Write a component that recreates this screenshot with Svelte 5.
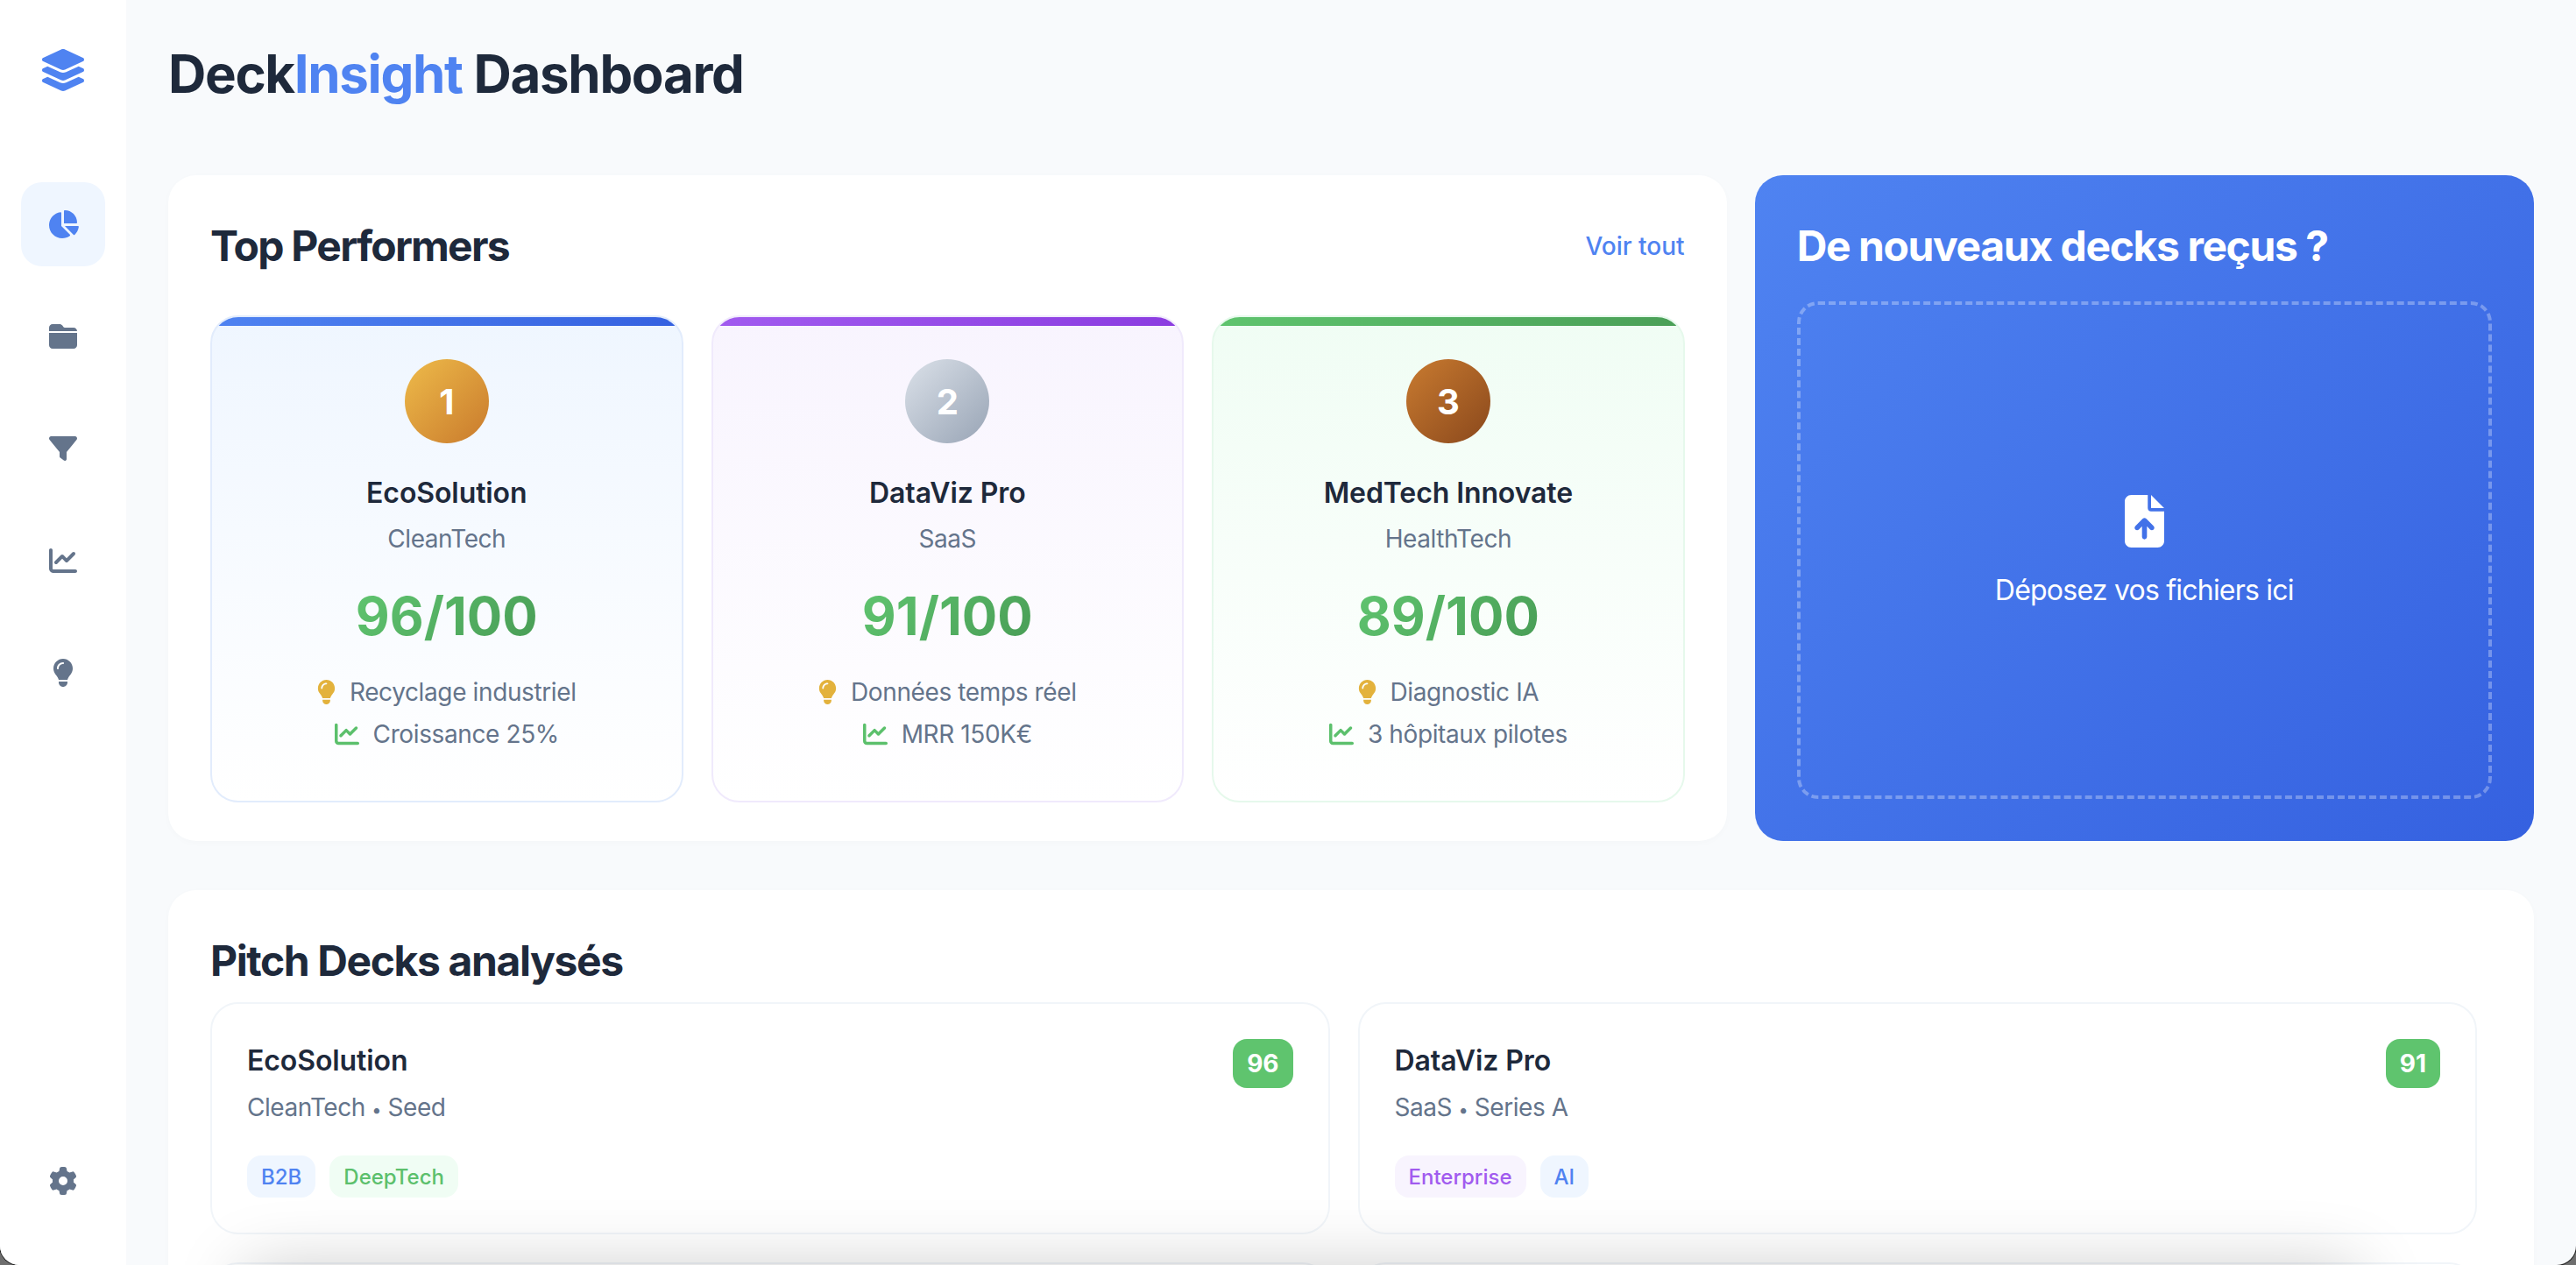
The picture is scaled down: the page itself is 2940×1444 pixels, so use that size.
<script>
    const icons = {
        layers: ["0 0 576 512", "M264.5 5.2c14.9-6.9 32.1-6.9 47 0l218.6 101c8.5 3.9 13.9 12.4 13.9 21.8s-5.4 17.9-13.9 21.8l-218.6 101c-14.9 6.9-32.1 6.9-47 0L45.9 149.8C37.4 145.8 32 137.3 32 128s5.4-17.9 13.9-21.8L264.5 5.2zM476.9 209.6l53.2 24.6c8.5 3.9 13.9 12.4 13.9 21.8s-5.4 17.9-13.9 21.8l-218.6 101c-14.9 6.9-32.1 6.9-47 0L45.9 277.8C37.4 273.8 32 265.3 32 256s5.4-17.9 13.9-21.8l53.2-24.6 152 70.2c23.4 10.8 50.4 10.8 73.8 0l152-70.2zm-152 198.2l152-70.2 53.2 24.6c8.5 3.9 13.9 12.4 13.9 21.8s-5.4 17.9-13.9 21.8l-218.6 101c-14.9 6.9-32.1 6.9-47 0L45.9 405.8C37.4 401.8 32 393.3 32 384s5.4-17.9 13.9-21.8l53.2-24.6 152 70.2c23.4 10.8 50.4 10.8 73.8 0z"],
        pie: ["0 0 576 512", "M304 240V16.6c0-9 7-16.6 16-16.6C443.7 0 544 100.3 544 224c0 9-7.6 16-16.6 16H304zM32 272C32 150.7 122.1 50.3 239 34.3c9.2-1.3 17 6.1 17 15.4V288L412.5 444.5c6.7 6.7 6.2 17.7-1.5 23.1C371.8 495.6 323.8 512 272 512C139.5 512 32 404.6 32 272zm526.4 16c9.3 0 16.6 7.8 15.4 17c-7.7 55.9-34.6 105.6-73.9 142.3c-6 5.6-15.4 5.2-21.2-.7L320 288H558.4z"],
        folder: ["0 0 512 512", "M448 480H64c-35.3 0-64-28.7-64-64V192H512V416c0 35.3-28.7 64-64 64zm64-320H0V96C0 60.7 28.7 32 64 32H192c20.1 0 39.1 9.5 51.2 25.6l19.2 25.6c6 8.1 15.5 12.8 25.6 12.8H448c35.3 0 64 28.7 64 64z"],
        filter: ["0 0 512 512", "M3.9 54.9C10.5 40.9 24.5 32 40 32H472c15.5 0 29.5 8.9 36.1 22.9s4.6 30.5-5.2 42.5L320 320.9V448c0 12.1-6.8 23.2-17.7 28.6s-23.8 4.3-33.5-3l-64-48c-8.1-6-12.8-15.5-12.8-25.6V320.9L9 97.3C-.7 85.4-2.8 68.8 3.9 54.9z"],
        chart: ["0 0 512 512", "M64 64c0-17.7-14.3-32-32-32S0 46.3 0 64V400c0 44.2 35.8 80 80 80H480c17.7 0 32-14.3 32-32s-14.3-32-32-32H80c-8.8 0-16-7.2-16-16V64zm406.6 86.6c12.5-12.5 12.5-32.8 0-45.3s-32.8-12.5-45.3 0L320 210.7l-57.4-57.4c-12.5-12.5-32.8-12.5-45.3 0l-112 112c-12.5 12.5-12.5 32.8 0 45.3s32.8 12.5 45.3 0L240 221.3l57.4 57.4c12.5 12.5 32.8 12.5 45.3 0l128-128z"],
        bulb: ["0 0 384 512", "M272 384c9.6-31.9 29.5-59.1 49.2-86.2l0 0c5.2-7.1 10.4-14.2 15.4-21.4c19.8-28.5 31.4-63 31.4-100.3C368 78.8 289.2 0 192 0S16 78.8 16 176c0 37.3 11.6 71.9 31.4 100.3c5 7.2 10.2 14.3 15.4 21.4l0 0c19.8 27.1 39.7 54.4 49.2 86.2H272zM192 512c44.2 0 80-35.8 80-80V416H112v16c0 44.2 35.8 80 80 80zM112 176c0 8.8-7.2 16-16 16s-16-7.2-16-16c0-61.9 50.1-112 112-112c8.8 0 16 7.2 16 16s-7.2 16-16 16c-44.2 0-80 35.8-80 80z"],
        gear: ["0 0 512 512", "M495.9 166.6c3.2 8.7 .5 18.4-6.4 24.6l-43.3 39.4c1.1 8.3 1.7 16.8 1.7 25.4s-.6 17.1-1.7 25.4l43.3 39.4c6.9 6.2 9.6 15.9 6.4 24.6c-4.4 11.9-9.7 23.3-15.8 34.3l-4.7 8.1c-6.6 11-14 21.4-22.1 31.2c-5.9 7.2-15.7 9.6-24.5 6.8l-55.7-17.7c-13.4 10.3-28.2 18.9-44 25.4l-12.5 57.1c-2 9.1-9 16.3-18.2 17.8c-13.8 2.3-28 3.5-42.5 3.5s-28.7-1.2-42.5-3.5c-9.2-1.5-16.2-8.7-18.2-17.8l-12.5-57.1c-15.8-6.5-30.6-15.1-44-25.4L83.1 425.9c-8.8 2.8-18.6 .3-24.5-6.8c-8.1-9.8-15.5-20.2-22.1-31.2l-4.7-8.1c-6.1-11-11.4-22.4-15.8-34.3c-3.2-8.7-.5-18.4 6.4-24.6l43.3-39.4C64.6 273.1 64 264.6 64 256s.6-17.1 1.7-25.4L22.4 191.2c-6.9-6.2-9.6-15.9-6.4-24.6c4.4-11.9 9.7-23.3 15.8-34.3l4.7-8.1c6.6-11 14-21.4 22.1-31.2c5.9-7.2 15.7-9.6 24.5-6.8l55.7 17.7c13.4-10.3 28.2-18.9 44-25.4l12.5-57.1c2-9.1 9-16.3 18.2-17.8C227.3 1.2 241.5 0 256 0s28.7 1.2 42.5 3.5c9.2 1.5 16.2 8.7 18.2 17.8l12.5 57.1c15.8 6.5 30.6 15.1 44 25.4l55.7-17.7c8.8-2.8 18.6-.3 24.5 6.8c8.1 9.8 15.5 20.2 22.1 31.2l4.7 8.1c6.1 11 11.4 22.4 15.8 34.3zM256 336a80 80 0 1 0 0-160 80 80 0 1 0 0 160z"],
        upload: ["0 0 384 512", "M64 0C28.7 0 0 28.7 0 64V448c0 35.3 28.7 64 64 64H320c35.3 0 64-28.7 64-64V160H256c-17.7 0-32-14.3-32-32V0H64zM256 0V128H384L256 0zM216 408c0 13.3-10.7 24-24 24s-24-10.7-24-24V305.9l-31 31c-9.4 9.4-24.6 9.4-33.9 0s-9.4-24.6 0-33.9l72-72c9.4-9.4 24.6-9.4 33.9 0l72 72c9.4 9.4 9.4 24.6 0 33.9s-24.6 9.4-33.9 0l-31-31V408z"],
    };

    const navItems = ["pie", "folder", "filter", "chart", "bulb"];

    const performers = [
        { rank: 1, name: "EcoSolution", sector: "CleanTech", score: 96, idea: "Recyclage industriel", metric: "Croissance 25%", tone: "blue" },
        { rank: 2, name: "DataViz Pro", sector: "SaaS", score: 91, idea: "Données temps réel", metric: "MRR 150K€", tone: "purple" },
        { rank: 3, name: "MedTech Innovate", sector: "HealthTech", score: 89, idea: "Diagnostic IA", metric: "3 hôpitaux pilotes", tone: "green" },
    ];

    const decks = [
        { name: "EcoSolution", sector: "CleanTech", stage: "Seed", score: 96, tags: [["B2B", "blue"], ["DeepTech", "green"]] },
        { name: "DataViz Pro", sector: "SaaS", stage: "Series A", score: 91, tags: [["Enterprise", "purple"], ["AI", "blue"]] },
    ];
</script>

{#snippet icon(name, cls)}
    <svg class={cls} viewBox={icons[name][0]} aria-hidden="true"><path d={icons[name][1]} /></svg>
{/snippet}

<div class="window">
    <aside class="sidebar">
        <div class="logo">{@render icon("layers", "logo-icon")}</div>
        <nav class="nav">
            {#each navItems as item, i}
                <div class="nav-item" class:active={i === 0}>{@render icon(item, "nav-icon")}</div>
            {/each}
        </nav>
        <div class="nav-item">{@render icon("gear", "nav-icon")}</div>
    </aside>

    <main class="page">
        <h1>Deck<span>Insight</span> Dashboard</h1>

        <div class="top-row">
            <section class="panel performers">
                <div class="panel-head">
                    <h2>Top Performers</h2>
                    <span class="see-all">Voir tout</span>
                </div>
                <div class="podium">
                    {#each performers as p}
                        <article class="performer {p.tone}">
                            <div class="medal rank-{p.rank}">{p.rank}</div>
                            <h3>{p.name}</h3>
                            <p class="sector">{p.sector}</p>
                            <p class="score">{p.score}/100</p>
                            <div class="fact">{@render icon("bulb", "fact-icon bulb")}{p.idea}</div>
                            <div class="fact">{@render icon("chart", "fact-icon trend")}{p.metric}</div>
                        </article>
                    {/each}
                </div>
            </section>

            <section class="upload">
                <h2>De nouveaux decks reçus ?</h2>
                <div class="dropzone">
                    {@render icon("upload", "upload-icon")}
                    <p>Déposez vos fichiers ici</p>
                </div>
            </section>
        </div>

        <section class="panel decks">
            <h2>Pitch Decks analysés</h2>
            <div class="deck-grid">
                {#each decks as d}
                    <article class="deck">
                        <div class="deck-head">
                            <div>
                                <h3>{d.name}</h3>
                                <p class="meta">{d.sector} <span class="dot">•</span> {d.stage}</p>
                            </div>
                            <span class="badge">{d.score}</span>
                        </div>
                        <div class="tags">
                            {#each d.tags as [label, tone]}
                                <span class="tag {tone}">{label}</span>
                            {/each}
                        </div>
                    </article>
                {/each}
                <!-- next row is cut off by the window, only its top edge shows -->
                <article class="deck empty"></article>
                <article class="deck empty"></article>
            </div>
        </section>

        <div class="drop-shadow"></div>
    </main>
</div>

<style>
    :global(body) {
        margin: 0;
        background: #6e6e6e;
        font-family: Inter, "Liberation Sans", sans-serif;
        overflow: hidden;
    }

    .window {
        display: flex;
        height: 1444px;
        overflow: hidden;
        border-radius: 0 0 22px 22px;
        background: #f8fafc;
        box-shadow: 0 0 0 1px #222;
    }

    svg {
        display: block;
        fill: currentColor;
        flex: none;
    }

    .sidebar {
        flex: none;
        width: 144px;
        box-sizing: border-box;
        padding: 56px 24px 48px;
        display: flex;
        flex-direction: column;
        align-items: center;
        background: #fff;
        color: #64748b;
    }

    .logo {
        color: #4f83f1;
        margin-bottom: 104px;
    }

    :global(.logo-icon) {
        height: 48px;
    }

    .nav {
        flex: 1;
        display: flex;
        flex-direction: column;
        gap: 32px;
    }

    .nav-item {
        width: 96px;
        height: 96px;
        border-radius: 24px;
        display: flex;
        align-items: center;
        justify-content: center;
    }

    .nav-item.active {
        background: #eff6ff;
        color: #4f83f1;
    }

    :global(.nav-icon) {
        height: 32px;
    }

    .page {
        position: relative;
        flex: 1;
        min-width: 0;
        padding: 48px 48px 0;
    }

    h1 {
        margin: 0 0 80px;
        font-size: 60px;
        line-height: 72px;
        font-weight: 700;
        letter-spacing: -1.34px;
        color: #1e293b;
    }

    h1 span {
        color: #4f83f1;
    }

    h2 {
        margin: 0;
        font-size: 48px;
        line-height: 66px;
        font-weight: 700;
        letter-spacing: -1.4px;
        color: #1e293b;
    }

    .performers h2 {
        letter-spacing: -1.75px;
    }

    h3 {
        margin: 0;
        font-size: 32px;
        line-height: 48px;
        font-weight: 600;
        letter-spacing: -0.1px;
        color: #1e293b;
    }

    p {
        margin: 0;
    }

    .top-row {
        display: grid;
        grid-template-columns: 2fr 1fr;
        gap: 32px;
        margin-bottom: 56px;
    }

    .panel {
        background: #fff;
        border-radius: 32px;
        padding: 48px;
        box-shadow: 0 2px 8px rgba(15, 23, 42, 0.02);
    }

    .performers {
        padding-bottom: 44px;
    }

    .panel-head {
        display: flex;
        justify-content: space-between;
        align-items: center;
        margin-bottom: 46px;
    }

    .see-all {
        font-size: 28px;
        font-weight: 500;
        color: #4f83f1;
    }

    .podium {
        display: grid;
        grid-template-columns: repeat(3, 1fr);
        gap: 32px;
    }

    .performer {
        position: relative;
        overflow: hidden;
        height: 556px;
        box-sizing: border-box;
        padding-top: 48px;
        border: 2px solid;
        border-radius: 32px;
        display: flex;
        flex-direction: column;
        align-items: center;
    }

    .performer::before {
        content: "";
        position: absolute;
        top: 0;
        left: 0;
        right: 0;
        height: 10px;
    }

    .performer.blue {
        background: linear-gradient(180deg, #eff6ff, #fff);
        border-color: #e2ecfc;
    }

    .performer.blue::before {
        background: linear-gradient(90deg, #4f83f1, #3561e0);
    }

    .performer.purple {
        background: linear-gradient(180deg, #f8f4fe, #fff);
        border-color: #f0eafc;
    }

    .performer.purple::before {
        background: linear-gradient(90deg, #a15bef, #8b3ce0);
    }

    .performer.green {
        background: linear-gradient(180deg, #f0fdf4, #fff);
        border-color: #e6f9ec;
    }

    .performer.green::before {
        background: linear-gradient(90deg, #5fc46e, #4a9f57);
    }

    .medal {
        width: 96px;
        height: 96px;
        margin-bottom: 33px;
        border-radius: 50%;
        display: flex;
        align-items: center;
        justify-content: center;
        font-size: 40px;
        font-weight: 700;
        color: #fff;
    }

    .rank-1 {
        background: linear-gradient(135deg, #eebb4a, #c97a2c);
    }

    .rank-2 {
        background: linear-gradient(135deg, #dbe1e9, #98a4b5);
    }

    .rank-3 {
        background: linear-gradient(135deg, #c97b30, #8a481c);
    }

    .sector {
        margin-top: 8px;
        font-size: 28px;
        line-height: 40px;
        letter-spacing: -0.45px;
        color: #64748b;
    }

    .score {
        margin: 32px 0 27px;
        font-size: 60px;
        line-height: 72px;
        font-weight: 700;
        background: linear-gradient(135deg, #60c570, #489c55);
        -webkit-background-clip: text;
        background-clip: text;
        color: transparent;
    }

    .fact {
        display: flex;
        align-items: center;
        gap: 16px;
        font-size: 28px;
        line-height: 48px;
        letter-spacing: -0.38px;
        color: #64748b;
    }

    :global(.fact-icon) {
        height: 28px;
    }

    :global(.fact-icon.bulb) {
        color: #e3b23c;
    }

    :global(.fact-icon.trend) {
        color: #5cc06c;
    }

    .upload {
        box-sizing: border-box;
        height: 760px;
        padding: 48px;
        border-radius: 32px;
        display: flex;
        flex-direction: column;
        background: linear-gradient(135deg, #4f83f1, #3561e0);
    }

    .upload h2 {
        color: #fff;
        margin-bottom: 30px;
    }

    .dropzone {
        flex: 1;
        border: 4px dashed rgba(255, 255, 255, 0.3);
        border-radius: 24px;
        display: flex;
        flex-direction: column;
        align-items: center;
        justify-content: center;
        gap: 29px;
        padding-top: 2px;
        color: #fff;
        font-size: 32px;
        line-height: 40px;
        letter-spacing: -0.78px;
    }

    :global(.upload-icon) {
        height: 60px;
    }

    .decks {
        padding-right: 65px;
        height: 500px;
        box-sizing: border-box;
    }

    .decks h2 {
        margin-bottom: 14px;
    }

    .deck-grid {
        display: grid;
        grid-template-columns: 1fr 1fr;
        gap: 32px;
    }

    .deck {
        box-sizing: border-box;
        padding: 40px;
        border: 2px solid #f1f5f9;
        border-radius: 32px;
        background: #fff;
    }

    .deck.empty {
        height: 264px;
    }

    .deck-head {
        display: flex;
        justify-content: space-between;
        align-items: flex-start;
    }

    .deck-head h3 {
        padding-top: 1px;
    }

    .meta {
        margin-top: 9px;
        font-size: 28px;
        line-height: 40px;
        letter-spacing: -0.45px;
        color: #64748b;
    }

    .dot {
        font-size: 20px;
    }

    .badge {
        height: 56px;
        padding: 0 16px;
        border-radius: 16px;
        display: flex;
        align-items: center;
        font-size: 28px;
        font-weight: 700;
        color: #fff;
        background: #5fc46e;
    }

    .tags {
        display: flex;
        gap: 16px;
        margin-top: 32px;
    }

    .tag {
        height: 48px;
        padding: 0 16px;
        border-radius: 16px;
        display: flex;
        align-items: center;
        font-size: 24px;
        font-weight: 500;
    }

    .tag.blue {
        background: #eff6ff;
        color: #4f83f1;
    }

    .tag.green {
        background: #f0fdf4;
        color: #5cc06c;
    }

    .tag.purple {
        background: #f8f4fe;
        color: #a15bef;
    }

    .drop-shadow {
        position: absolute;
        top: 1450px;
        left: 136px;
        right: 250px;
        height: 100px;
        box-shadow: 0 0 80px rgba(0, 0, 0, 0.22);
        pointer-events: none;
    }
</style>
